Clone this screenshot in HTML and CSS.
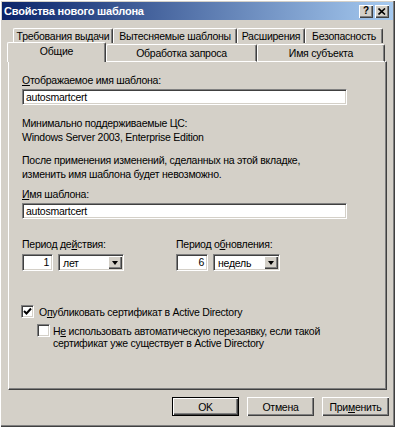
FILE: index.html
```html
<!DOCTYPE html>
<html lang="ru">
<head>
    <meta charset="UTF-8">
    <title>Свойства нового шаблона</title>
    <link rel="stylesheet" href="styles.css">
</head>
<body>
    <div class="window">
        <div class="titlebar">
            <span class="title">Свойства нового шаблона</span>
            <div class="caption-buttons">
                <span class="cap-btn help">?</span>
                <span class="cap-btn close">
                    <svg width="8" height="7" viewBox="0 0 8 7"><path d="M0.5 0.5 L7 6.5 M7 0.5 L0.5 6.5" stroke="#000" stroke-width="1.6"/></svg>
                </span>
            </div>
        </div>

        <div class="tabs">
            <div class="tab-row back">
                <div class="tab" style="width:100px">Требования выдачи</div>
                <div class="tab" style="width:124px">Вытесняемые шаблоны</div>
                <div class="tab" style="width:68px">Расширения</div>
                <div class="tab" style="width:78px">Безопасность</div>
            </div>
            <div class="tab-row front">
                <div class="tab selected" style="width:99px">Общие</div>
                <div class="tab" style="width:151px">Обработка запроса</div>
                <div class="tab" style="width:128px">Имя субъекта</div>
            </div>
        </div>

        <div class="panel">
            <div class="label first"><u>О</u>тображаемое имя шаблона:</div>
            <div class="edit wide">autosmartcert</div>

            <p class="text info">Минимально поддерживаемые ЦС:<br>Windows Server 2003, Enterprise Edition</p>
            <p class="text note">После применения изменений, сделанных на этой вкладке,<br>изменить имя шаблона будет невозможно.</p>

            <div class="label name"><u>И</u>мя шаблона:</div>
            <div class="edit wide">autosmartcert</div>

            <div class="periods">
                <div class="period">
                    <div class="label">Период де<u>й</u>ствия:</div>
                    <div class="period-fields">
                        <div class="edit num" style="width:31px">1</div>
                        <div class="combo" style="width:66px">
                            <span class="combo-text">лет</span>
                            <span class="combo-btn"><span class="arrow"></span></span>
                        </div>
                    </div>
                </div>
                <div class="period">
                    <div class="label">Период о<u>б</u>новления:</div>
                    <div class="period-fields">
                        <div class="edit num" style="width:32px">6</div>
                        <div class="combo" style="width:67px">
                            <span class="combo-text">недель</span>
                            <span class="combo-btn"><span class="arrow"></span></span>
                        </div>
                    </div>
                </div>
            </div>

            <div class="check publish">
                <span class="box">
                    <svg width="9" height="9" viewBox="0 0 9 9"><path d="M1 4 L3.5 6.5 L8 1.5" fill="none" stroke="#000" stroke-width="2"/></svg>
                </span>
                <span class="check-text">О<u>п</u>убликовать сертификат в Active Directory</span>
            </div>
            <div class="check sub">
                <span class="box"></span>
                <span class="check-text">Н<u>е</u> использовать автоматическую перезаявку, если такой<br>сертификат уже существует в Active Directory</span>
            </div>
        </div>

        <div class="buttons">
            <div class="btn default">OK</div>
            <div class="btn">Отмена</div>
            <div class="btn">При<u>м</u>енить</div>
        </div>
    </div>
</body>
</html>
```

FILE: styles.css
```css
body {
    margin: 0;
    font-family: "Liberation Sans", Arial, sans-serif;
    font-size: 10.5px;
    letter-spacing: -0.25px;
    color: #000;
}
.window {
    width: 395px;
    height: 427px;
    box-sizing: border-box;
    padding: 2px;
    background: #d4d0c8;
    box-shadow: inset 1px 1px #fff, inset -1px -1px #404040, inset -2px -2px #808080;
}
.titlebar {
    height: 18px;
    display: flex;
    align-items: center;
    justify-content: space-between;
    padding: 0 4px 0 2px;
    background: linear-gradient(to right, #0a246a, #a6caf0);
}
.title {
    color: #fff;
    font-weight: bold;
    font-size: 11px;
    letter-spacing: -0.2px;
}
.caption-buttons {
    display: flex;
    gap: 2px;
}
.cap-btn {
    width: 14px;
    height: 13px;
    box-sizing: border-box;
    display: flex;
    align-items: center;
    justify-content: center;
    background: #d4d0c8;
    box-shadow: inset 1px 1px #fff, inset -1px -1px #404040, inset -2px -2px #808080;
    font-weight: bold;
    font-size: 10px;
    line-height: 1;
}
.tabs {
    margin-top: 8px;
}
.tab-row {
    display: flex;
}
.tab-row.back {
    height: 15px;
    padding-left: 11px;
}
.tab-row.front {
    height: 20px;
    margin-top: -1px;
    margin-bottom: -1px;
    padding-left: 5px;
    align-items: flex-end;
    position: relative;
    z-index: 1;
}
.tab {
    box-sizing: border-box;
    height: 100%;
    text-align: center;
    white-space: nowrap;
    border-top: 1px solid #fff;
    border-left: 1px solid #fff;
    border-right: 1px solid #404040;
    box-shadow: inset -1px 0 #808080;
    border-radius: 2px 2px 0 0;
    line-height: 14px;
    background: #d4d0c8;
}
.tab-row.front .tab {
    height: 18px;
    line-height: 16px;
    border-bottom: 1px solid #fff;
}
.tab-row.front .tab.selected {
    height: 20px;
    line-height: 17px;
    border-bottom: none;
}
.panel {
    margin-left: 6px;
    width: 379px;
    height: 329px;
    box-sizing: border-box;
    padding-left: 13px;
    border-top: 1px solid #fff;
    border-left: 1px solid #fff;
    border-right: 1px solid #404040;
    border-bottom: 1px solid #404040;
    box-shadow: inset -1px -1px #808080;
}
.label {
    line-height: 13px;
    white-space: nowrap;
}
.label.first {
    margin-top: 12px;
}
.label.name {
    margin-top: 7px;
}
.edit {
    box-sizing: border-box;
    height: 16px;
    margin-top: 2px;
    padding: 0 3px;
    line-height: 14px;
    background: #fff;
    border-top: 1px solid #808080;
    border-left: 1px solid #808080;
    border-right: 1px solid #fff;
    border-bottom: 1px solid #fff;
    box-shadow: inset 1px 1px #404040, inset -1px -1px #d4d0c8;
}
.edit.wide {
    width: 325px;
}
.text {
    margin: 0;
    line-height: 14px;
}
.text.info {
    margin-top: 11px;
}
.text.note {
    margin-top: 9px;
}
.periods {
    display: flex;
    margin-top: 19px;
}
.period {
    width: 154px;
}
.period-fields {
    display: flex;
    gap: 5px;
    margin-top: 3px;
}
.period-fields .edit {
    height: 17px;
    margin-top: 0;
    text-align: right;
    line-height: 15px;
}
.combo {
    box-sizing: border-box;
    height: 17px;
    display: flex;
    align-items: center;
    justify-content: space-between;
    padding: 2px;
    background: #fff;
    border-top: 1px solid #808080;
    border-left: 1px solid #808080;
    border-right: 1px solid #fff;
    border-bottom: 1px solid #fff;
    box-shadow: inset 1px 1px #404040, inset -1px -1px #d4d0c8;
}
.combo-text {
    padding-left: 2px;
}
.combo-btn {
    width: 14px;
    height: 13px;
    margin-right: -1px;
    display: flex;
    align-items: center;
    justify-content: center;
    background: #d4d0c8;
    box-shadow: inset 1px 1px #fff, inset -1px -1px #404040, inset -2px -2px #808080;
}
.arrow {
    width: 0;
    height: 0;
    border-left: 3.5px solid transparent;
    border-right: 3.5px solid transparent;
    border-top: 4px solid #000;
}
.check {
    display: flex;
    align-items: flex-start;
    gap: 5px;
}
.check.publish {
    margin-top: 34px;
    margin-left: -1px;
    align-items: center;
}
.check.sub {
    margin-top: 6px;
    margin-left: 15px;
    gap: 3px;
}
.box {
    width: 13px;
    height: 13px;
    flex: none;
    box-sizing: border-box;
    display: flex;
    align-items: center;
    justify-content: center;
    background: #fff;
    border-top: 1px solid #808080;
    border-left: 1px solid #808080;
    border-right: 1px solid #fff;
    border-bottom: 1px solid #fff;
    box-shadow: inset 1px 1px #404040, inset -1px -1px #d4d0c8;
}
.check-text {
    line-height: 12px;
}
.check.sub .check-text {
    margin-top: 1px;
}
.buttons {
    display: flex;
    justify-content: flex-end;
    gap: 8px;
    margin-top: 7px;
    padding-right: 4px;
}
.btn {
    width: 67px;
    height: 19px;
    box-sizing: border-box;
    display: flex;
    align-items: center;
    justify-content: center;
    box-shadow: inset 1px 1px #fff, inset -1px -1px #404040, inset -2px -2px #808080;
}
.btn.default {
    border: 1px solid #000;
}
u {
    text-decoration: underline;
    text-underline-offset: 1px;
}
```
